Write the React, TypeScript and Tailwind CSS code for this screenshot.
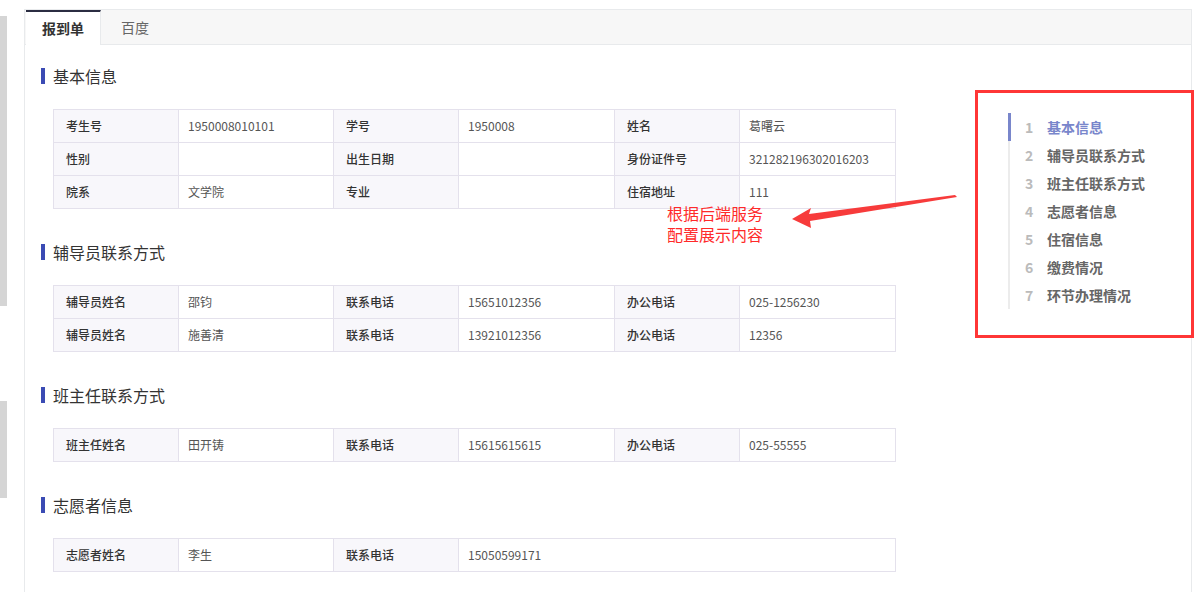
import React from "react";

type Pair = [string, string];

const sections: { title: string; rows: Pair[][] }[] = [
  {
    title: "基本信息",
    rows: [
      [["考生号", "1950008010101"], ["学号", "1950008"], ["姓名", "葛曙云"]],
      [["性别", ""], ["出生日期", ""], ["身份证件号", "321282196302016203"]],
      [["院系", "文学院"], ["专业", ""], ["住宿地址", "111"]],
    ],
  },
  {
    title: "辅导员联系方式",
    rows: [
      [["辅导员姓名", "邵钧"], ["联系电话", "15651012356"], ["办公电话", "025-1256230"]],
      [["辅导员姓名", "施善清"], ["联系电话", "13921012356"], ["办公电话", "12356"]],
    ],
  },
  {
    title: "班主任联系方式",
    rows: [[["班主任姓名", "田开铸"], ["联系电话", "15615615615"], ["办公电话", "025-55555"]]],
  },
  {
    title: "志愿者信息",
    rows: [[["志愿者姓名", "李生"], ["联系电话", "15050599171"]]],
  },
];

const navItems = ["基本信息", "辅导员联系方式", "班主任联系方式", "志愿者信息", "住宿信息", "缴费情况", "环节办理情况"];

function InfoTable({ rows }: { rows: Pair[][] }) {
  return (
    <table className="ml-[12px] w-[842px] table-fixed border-collapse text-[12px]">
      <colgroup>
        <col className="w-[125px]" />
        <col className="w-[155px]" />
        <col className="w-[125px]" />
        <col className="w-[156px]" />
        <col className="w-[125px]" />
        <col className="w-[156px]" />
      </colgroup>
      <tbody>
        {rows.map((row, i) => (
          <tr key={i} className="h-[33px]">
            {row.map(([label, value], j) => (
              <React.Fragment key={j}>
                <td className="border border-[#e4e1ec] bg-[#f8f7fb] py-0 pl-[12px] leading-[16px] font-medium text-[#333]">
                  {label}
                </td>
                <td
                  colSpan={j === row.length - 1 && row.length < 3 ? 1 + (3 - row.length) * 2 : 1}
                  className="border border-[#e4e1ec] py-0 pl-[9px] leading-[16px] text-[#555]"
                >
                  {value}
                </td>
              </React.Fragment>
            ))}
          </tr>
        ))}
      </tbody>
    </table>
  );
}

export default function App() {
  return (
    <div
      className="relative flex h-[592px] w-[1198px] overflow-hidden bg-white"
      style={{ fontFamily: '"Noto Sans CJK SC", "Noto Sans", sans-serif' }}
    >
      <div className="flex w-[24px] shrink-0 flex-col">
        <div className="mt-[16px] h-[290px] w-[7px] bg-[#d5d5d5]" />
        <div className="mt-[95px] h-[97px] w-[7px] bg-[#d5d5d5]" />
      </div>

      <div className="mt-[9px] mr-[6px] flex flex-1 flex-col border-l border-r border-t border-[#e8eaec]">
        <div className="flex h-[35px] border-b border-[#e8eaec] bg-[#f7f7f7] pl-[1px]">
          <div className="-mb-px flex w-[75px] items-center justify-center border-r border-t-2 border-r-[#e8eaec] border-t-[#2b2d42] bg-white text-[14px] font-bold text-[#333]">
            报到单
          </div>
          <div className="flex w-[68px] items-center justify-center text-[14px] text-[#666]">百度</div>
        </div>

        <div className="flex flex-col gap-[31px] pl-[16px] pt-[19px]">
          {sections.map((s) => (
            <div key={s.title} className="flex flex-col gap-[21px]">
              <div className="flex h-[24px] items-center">
                <div className="h-[16px] w-[4px] bg-[#3b4bb4]" />
                <span className="ml-[8px] text-[16px] leading-[24px] text-[#333]">{s.title}</span>
              </div>
              <InfoTable rows={s.rows} />
            </div>
          ))}
        </div>
      </div>

      {/* annotation overlay */}
      <div className="absolute left-[667px] top-[203px] flex flex-col gap-[1px] text-[16px] leading-[20px] text-[#ff2a2a]">
        <div>根据后端服务</div>
        <div>配置展示内容</div>
      </div>
      <svg className="absolute left-[785px] top-[190px]" width="180" height="45" viewBox="785 190 180 45">
        <polygon points="792,219 811,208 809,214 955,195 957,197 810,221 811,228" fill="#f73b3b" />
      </svg>

      <div className="absolute left-[975px] top-[90px] h-[248px] w-[219px] border-[3px] border-[#ff3636] bg-white">
        <div className="ml-[30px] mt-[20px] flex flex-col border-l-2 border-[#ececec]">
          {navItems.map((item, i) => (
            <div
              key={item}
              className={
                "-ml-[2px] flex h-[28px] items-center border-l-[3px] text-[14px] font-bold " +
                (i === 0 ? "border-[#7986cb] text-[#7986cb]" : "border-transparent text-[#666]")
              }
            >
              <span className="w-[36px] pl-[14px] text-[#bbb]">{i + 1}</span>
              <span>{item}</span>
            </div>
          ))}
        </div>
      </div>
    </div>
  );
}
